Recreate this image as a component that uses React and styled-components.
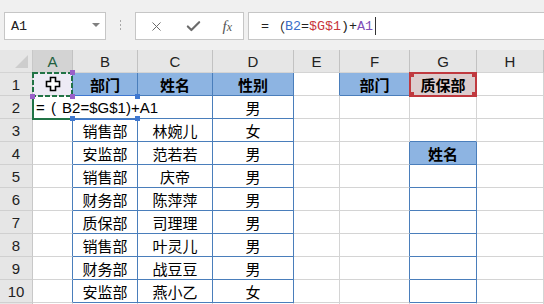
import React from "react";
import styled, { createGlobalStyle } from "styled-components";
import { X, Check } from "lucide-react";

const GlobalStyle = createGlobalStyle`
  html, body {
    margin: 0;
    padding: 0;
    background: #ffffff;
    overflow: hidden;
  }
  body {
    font-family: "Liberation Sans", "Noto Sans CJK SC", sans-serif;
  }
`;

const GRID = "#d4d4d4";
const BLUE = "#4a7ebb";
const FILL_BLUE = "#8db4e2";

const COLS = ["A", "B", "C", "D", "E", "F", "G", "H"];

const DATA = [
  null,
  ["", "", "男"],
  ["销售部", "林婉儿", "女"],
  ["安监部", "范若若", "男"],
  ["销售部", "庆帝", "男"],
  ["财务部", "陈萍萍", "男"],
  ["质保部", "司理理", "男"],
  ["销售部", "叶灵儿", "男"],
  ["财务部", "战豆豆", "男"],
  ["安监部", "燕小乙", "女"],
];

const App = () => {
  const cells = [];

  for (let r = 1; r <= 11; r++) {
    for (let c = 0; c < 8; c++) {
      let text = "";
      let bold = false;
      let bg = "#ffffff";
      let right = GRID;
      let bottom = GRID;

      const inTable = c >= 1 && c <= 3 && r <= 10;
      if (inTable) {
        right = BLUE;
        bottom = BLUE;
        if (r === 1) {
          text = ["部门", "姓名", "性别"][c - 1];
          bold = true;
          bg = FILL_BLUE;
        } else {
          text = DATA[r - 1][c - 1];
        }
      }
      if (c === 0 && r <= 10) right = BLUE;
      if (r === 1 && (c === 4 || c === 5)) right = BLUE;
      if (r === 1 && c === 5) {
        text = "部门";
        bold = true;
        bg = FILL_BLUE;
        bottom = BLUE;
      }
      if (r === 1 && c === 6) {
        text = "质保部";
        bold = true;
        bg = "#dccdce";
      }
      if ((c === 5 || c === 6) && r >= 4 && r <= 10) right = BLUE;
      if (c === 6 && r >= 3 && r <= 10) bottom = BLUE;
      if (c === 6 && r === 4) {
        text = "姓名";
        bold = true;
        bg = FILL_BLUE;
      }
      if (r === 1 && c === 0) bg = "#edebf5";

      cells.push(
        <Cell
          key={`${r}-${c}`}
          $row={r + 1}
          $col={c + 2}
          $bg={bg}
          $right={right}
          $bottom={bottom}
          $bold={bold}
        >
          {r === 1 && c === 0 ? <PlusCursor /> : text}
        </Cell>
      );
    }
  }

  return (
    <>
      <GlobalStyle />
      <Page>
        <FormulaBar>
          <NameBox>
            <span>A1</span>
            <DropArrow />
          </NameBox>
          <Grip />
          <ButtonBox>
            <X size={15} strokeWidth={1.6} color="#6b6b6b" />
            <Check size={17} strokeWidth={3} color="#6b6b6b" />
            <Fx>
              f<sub>x</sub>
            </Fx>
          </ButtonBox>
          <FormulaBox>
            <Tok>=</Tok>
            <Wide>（</Wide>
            <Tok $c="#3a6fc8">B2</Tok>
            <Tok>=</Tok>
            <Tok $c="#c8343c">$G$1</Tok>
            <Tok>)+</Tok>
            <Tok $c="#8050b8">A1</Tok>
            <Caret />
          </FormulaBox>
        </FormulaBar>

        <Sheet>
          <Corner>
            <Triangle />
          </Corner>
          {COLS.map((l, i) => (
            <ColHead key={l} $col={i + 2} $active={i === 0}>
              {l}
            </ColHead>
          ))}
          {Array.from({ length: 11 }, (_, i) => (
            <RowHead key={i} $row={i + 2}>
              {i < 10 ? i + 1 : ""}
            </RowHead>
          ))}
          {cells}

          <Editor>= ( B2=$G$1)+A1</Editor>
          <EditFrame />

          <RangeBox $row={3} $col={3} $color="#3f78d0" $sides="top-bottom">
            <Handle $v="top" $h="left" $color="#3f78d0" />
            <Handle $v="top" $h="right" $color="#3f78d0" />
            <Handle $v="bottom" $h="left" $color="#3f78d0" />
            <Handle $v="bottom" $h="right" $color="#3f78d0" />
          </RangeBox>

          <Marquee>
            <svg width="41" height="25" viewBox="0 0 41 25">
              <rect
                x="1"
                y="1"
                width="39"
                height="23"
                fill="none"
                stroke="#217346"
                strokeWidth="2"
                strokeDasharray="5 2"
              />
            </svg>
            <Handle $v="top" $h="right" $color="#9a5fc8" />
            <Handle $v="bottom" $h="right" $color="#9a5fc8" />
            <Handle $v="bottom" $h="left" $color="#9a5fc8" />
          </Marquee>

          <RangeBox $row={2} $col={8} $color="#c0393f">
            <Handle $v="top" $h="left" $color="#c0393f" />
            <Handle $v="top" $h="right" $color="#c0393f" />
            <Handle $v="bottom" $h="left" $color="#c0393f" />
            <Handle $v="bottom" $h="right" $color="#c0393f" />
          </RangeBox>
        </Sheet>
      </Page>
    </>
  );
};

export default App;

const PlusCursor = () => (
  <svg width="16" height="16" viewBox="0 0 16 16">
    <path
      d="M5.5 1.5h5v4h4v5h-4v4h-5v-4h-4v-5h4z"
      fill="#ffffff"
      stroke="#000000"
      strokeWidth="1.6"
      strokeLinejoin="miter"
    />
  </svg>
);

const Page = styled.div`
  width: 544px;
  height: 304px;
  overflow: hidden;
  display: flex;
  flex-direction: column;
  background: #ffffff;
`;

const FormulaBar = styled.div`
  height: 50px;
  flex-shrink: 0;
  box-sizing: border-box;
  background: #f0f0f0;
  display: flex;
  align-items: flex-start;
  padding: 12px 0 0 4px;
`;

const NameBox = styled.div`
  width: 102px;
  height: 28px;
  box-sizing: border-box;
  background: #ffffff;
  border: 1px solid #c6c6c6;
  display: flex;
  align-items: center;
  justify-content: space-between;
  padding: 0 5px 0 6px;
  font-family: "Liberation Mono", monospace;
  font-size: 13.5px;
  color: #222;
`;

const DropArrow = styled.div`
  width: 0;
  height: 0;
  border-left: 4px solid transparent;
  border-right: 4px solid transparent;
  border-top: 4px solid #808080;
  margin-top: -2px;
`;

const Grip = styled.div`
  width: 1px;
  height: 11px;
  margin: 8px 14px 0 14px;
  background: repeating-linear-gradient(
    to bottom,
    #a8a8a8 0 2px,
    transparent 2px 4px
  );
`;

const ButtonBox = styled.div`
  width: 109px;
  height: 28px;
  box-sizing: border-box;
  background: #ffffff;
  border: 1px solid #c6c6c6;
  display: flex;
  align-items: center;
  justify-content: space-between;
  padding: 0 11px 0 13px;
`;

const Fx = styled.span`
  font-family: "Liberation Serif", serif;
  font-style: italic;
  font-size: 15px;
  color: #555;
  & > sub {
    font-size: 12px;
    vertical-align: 0;
  }
`;

const FormulaBox = styled.div`
  flex: 1;
  height: 28px;
  margin-left: 4px;
  margin-right: -1px;
  box-sizing: border-box;
  background: #ffffff;
  border: 1px solid #c6c6c6;
  display: flex;
  align-items: center;
  padding-left: 12px;
  font-family: "Liberation Mono", "Noto Sans CJK SC", monospace;
  font-size: 13.33px;
  color: #222;
  white-space: pre;
`;

const Tok = styled.span`
  color: ${(p) => p.$c || "#222"};
`;

const Wide = styled.span`
  display: inline-block;
  width: 16px;
  text-align: right;
  color: #222;
  font-family: "Noto Sans CJK SC", sans-serif;
`;

const Caret = styled.span`
  width: 1px;
  height: 18px;
  margin-left: 2px;
  background: #333;
`;

const Sheet = styled.div`
  display: grid;
  grid-template-columns: 33px 40px 65px 75px 81px 46px 70px 67px 67px;
  grid-template-rows: repeat(12, 23px);
`;

const HeadBase = styled.div`
  box-sizing: border-box;
  background: #e6e6e6;
  display: flex;
  align-items: center;
  justify-content: center;
  font-size: 15px;
  color: #222;
`;

const Corner = styled(HeadBase)`
  grid-row: 1;
  grid-column: 1;
  border-right: 1px solid #c8c8c8;
  border-bottom: 1px solid #d4d4d4;
  position: relative;
`;

const Triangle = styled.div`
  position: absolute;
  right: 4px;
  bottom: 4px;
  width: 0;
  height: 0;
  border-left: 13px solid transparent;
  border-bottom: 13px solid #cdcdcd;
`;

const ColHead = styled(HeadBase)`
  grid-row: 1;
  grid-column: ${(p) => p.$col};
  background: ${(p) => (p.$active ? "#d3d3d3" : "#e6e6e6")};
  color: ${(p) => (p.$active ? "#1f6040" : "#222")};
  border-right: 1px solid #c2c2c2;
  border-bottom: 1px solid #d4d4d4;
`;

const RowHead = styled(HeadBase)`
  grid-column: 1;
  grid-row: ${(p) => p.$row};
  border-right: 1px solid #c8c8c8;
  border-bottom: 1px solid #d0d0d0;
  padding-top: 1px;
`;

const Cell = styled.div`
  grid-row: ${(p) => p.$row};
  grid-column: ${(p) => p.$col};
  box-sizing: border-box;
  background: ${(p) => p.$bg};
  border-right: 1px solid ${(p) => p.$right};
  border-bottom: 1px solid ${(p) => p.$bottom};
  display: flex;
  align-items: center;
  justify-content: center;
  font-size: 15px;
  font-weight: ${(p) => (p.$bold ? 700 : 400)};
  color: #000;
  white-space: nowrap;
  overflow: hidden;
`;

const Editor = styled.div`
  grid-row: 3;
  grid-column: 2 / 5;
  margin-bottom: 1px;
  margin-right: 1px;
  z-index: 2;
  background: #ffffff;
  display: flex;
  align-items: center;
  padding-left: 3px;
  font-size: 15px;
  word-spacing: 2px;
  color: #000;
  white-space: pre;
`;

const EditFrame = styled.div`
  grid-row: 3;
  grid-column: 2;
  margin-left: -1px;
  margin-right: 1px;
  margin-bottom: -1px;
  z-index: 3;
  border-left: 2px solid #217346;
  border-bottom: 2px solid #217346;
`;

const RangeBox = styled.div`
  grid-row: ${(p) => p.$row};
  grid-column: ${(p) => p.$col};
  margin: -1px 0 -1px -1px;
  z-index: ${(p) => (p.$sides ? 3 : 4)};
  position: relative;
  box-sizing: border-box;
  border: 2px solid ${(p) => p.$color};
  ${(p) =>
    p.$sides === "top-bottom" &&
    `border-left: none; border-right: none; border-width: 1px;`}
`;

const Marquee = styled.div`
  grid-row: 2;
  grid-column: 2;
  margin: -1px 0 -1px -1px;
  z-index: 5;
  position: relative;
  & > svg {
    position: absolute;
    left: 0;
    top: 0;
  }
`;

const Handle = styled.div`
  position: absolute;
  width: 5px;
  height: 5px;
  background: ${(p) => p.$color};
  ${(p) => (p.$v === "top" ? "top: -2px;" : "bottom: -2px;")}
  ${(p) => (p.$h === "left" ? "left: -2px;" : "right: -2px;")}
`;
